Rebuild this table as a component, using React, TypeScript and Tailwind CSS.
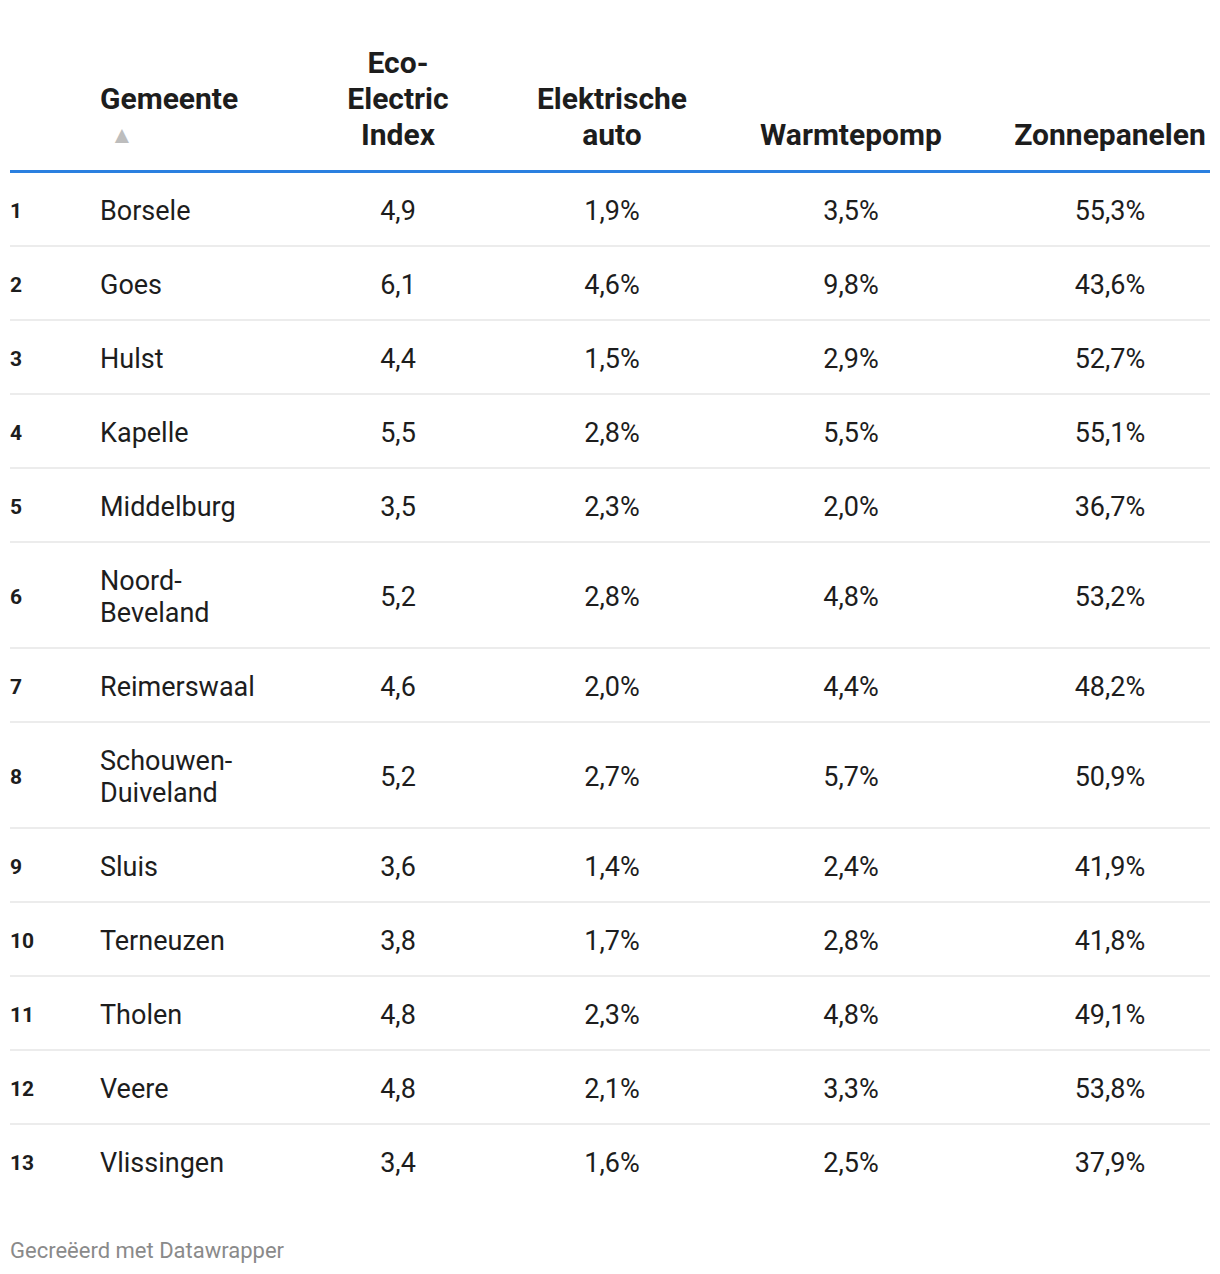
import React from 'react';

type Row = {
  rank: number;
  name: string[];
  index: string;
  auto: string;
  warmte: string;
  zon: string;
};

const rows: Row[] = [
  { rank: 1, name: ['Borsele'], index: '4,9', auto: '1,9%', warmte: '3,5%', zon: '55,3%' },
  { rank: 2, name: ['Goes'], index: '6,1', auto: '4,6%', warmte: '9,8%', zon: '43,6%' },
  { rank: 3, name: ['Hulst'], index: '4,4', auto: '1,5%', warmte: '2,9%', zon: '52,7%' },
  { rank: 4, name: ['Kapelle'], index: '5,5', auto: '2,8%', warmte: '5,5%', zon: '55,1%' },
  { rank: 5, name: ['Middelburg'], index: '3,5', auto: '2,3%', warmte: '2,0%', zon: '36,7%' },
  { rank: 6, name: ['Noord-', 'Beveland'], index: '5,2', auto: '2,8%', warmte: '4,8%', zon: '53,2%' },
  { rank: 7, name: ['Reimerswaal'], index: '4,6', auto: '2,0%', warmte: '4,4%', zon: '48,2%' },
  { rank: 8, name: ['Schouwen-', 'Duiveland'], index: '5,2', auto: '2,7%', warmte: '5,7%', zon: '50,9%' },
  { rank: 9, name: ['Sluis'], index: '3,6', auto: '1,4%', warmte: '2,4%', zon: '41,9%' },
  { rank: 10, name: ['Terneuzen'], index: '3,8', auto: '1,7%', warmte: '2,8%', zon: '41,8%' },
  { rank: 11, name: ['Tholen'], index: '4,8', auto: '2,3%', warmte: '4,8%', zon: '49,1%' },
  { rank: 12, name: ['Veere'], index: '4,8', auto: '2,1%', warmte: '3,3%', zon: '53,8%' },
  { rank: 13, name: ['Vlissingen'], index: '3,4', auto: '1,6%', warmte: '2,5%', zon: '37,9%' },
];

const cols = 'grid grid-cols-[90px_164px_268px_160px_318px_200px]';

export default function App() {
  return (
    <div className="bg-white w-[1220px] min-h-[1274px] px-[10px] pt-[45px] text-[#1d1d1d] font-['Roboto',sans-serif]">
      {/* Header */}
      <div className={`${cols} items-end border-b-[3px] border-[#2a80e0] pb-[17px] text-[30px] leading-[36px] font-bold`}>
        <div />
        <div className="whitespace-nowrap">
          <div>Gemeente</div>
          <div className="h-[36px] flex items-center pl-[10px] text-[24px] text-[#bdbdbd]">▲</div>
        </div>
        <div className="text-center">
          Eco-
          <br />
          Electric
          <br />
          Index
        </div>
        <div className="text-center whitespace-nowrap">
          Elektrische
          <br />
          auto
        </div>
        <div className="text-center">Warmtepomp</div>
        <div className="text-center whitespace-nowrap">Zonnepanelen</div>
      </div>

      {/* Rows */}
      {rows.map((r, i) => (
        <div
          key={r.rank}
          className={`${cols} items-center pt-[22px] pb-[18px] text-[27px] leading-[32px] ${
            i < rows.length - 1 ? 'border-b-2 border-[#ececec]' : ''
          }`}
        >
          <div className="text-[21px] font-bold">{r.rank}</div>
          <div className="whitespace-nowrap">
            {r.name.map((n) => (
              <div key={n}>{n}</div>
            ))}
          </div>
          <div className="text-center">{r.index}</div>
          <div className="text-center">{r.auto}</div>
          <div className="text-center">{r.warmte}</div>
          <div className="text-center">{r.zon}</div>
        </div>
      ))}

      {/* Footer */}
      <div className="mt-[40px] text-[22px] leading-[28px] text-[#8a8a8a]">Gecreëerd met Datawrapper</div>
    </div>
  );
}
